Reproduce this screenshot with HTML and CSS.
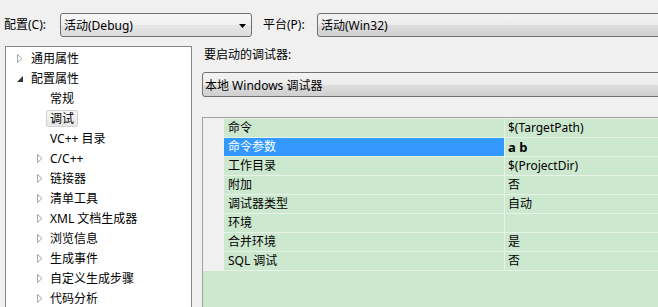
FILE: index.html
```html
<!DOCTYPE html>
<html lang="zh-CN">
<head>
<meta charset="utf-8">
<title>属性页</title>
<link rel="stylesheet" href="styles.css">
</head>
<body>
<div class="topbar">
  <span class="lbl lbl-config">配置(C):</span>
  <div class="combo combo-config">
    <span class="combo-text">活动(Debug)</span>
    <svg class="combo-arrow" width="7" height="4" viewBox="0 0 7 4"><path d="M0 0H7L3.5 4Z" fill="#000"/></svg>
  </div>
  <span class="lbl lbl-platform">平台(P):</span>
  <div class="combo combo-platform">
    <span class="combo-text">活动(Win32)</span>
  </div>
</div>
<div class="main">
  <div class="tree">
    <div class="node l1"><svg class="tw" width="6" height="9" viewBox="0 0 6 9"><path d="M0.5 0.5L5 4.5L0.5 8.5Z" fill="#fff" stroke="#a6a6a6"/></svg><span>通用属性</span></div>
    <div class="node l1"><svg class="tw" width="6" height="9" viewBox="0 0 6 9"><path d="M0 8H6V2Z" fill="#333"/></svg><span>配置属性</span></div>
    <div class="node l2 leaf"><span>常规</span></div>
    <div class="node l2 leaf"><span class="sel">调试</span></div>
    <div class="node l2 leaf"><span>VC++ 目录</span></div>
    <div class="node l2"><svg class="tw" width="6" height="9" viewBox="0 0 6 9"><path d="M0.5 0.5L5 4.5L0.5 8.5Z" fill="#fff" stroke="#a6a6a6"/></svg><span>C/C++</span></div>
    <div class="node l2"><svg class="tw" width="6" height="9" viewBox="0 0 6 9"><path d="M0.5 0.5L5 4.5L0.5 8.5Z" fill="#fff" stroke="#a6a6a6"/></svg><span>链接器</span></div>
    <div class="node l2"><svg class="tw" width="6" height="9" viewBox="0 0 6 9"><path d="M0.5 0.5L5 4.5L0.5 8.5Z" fill="#fff" stroke="#a6a6a6"/></svg><span>清单工具</span></div>
    <div class="node l2"><svg class="tw" width="6" height="9" viewBox="0 0 6 9"><path d="M0.5 0.5L5 4.5L0.5 8.5Z" fill="#fff" stroke="#a6a6a6"/></svg><span>XML 文档生成器</span></div>
    <div class="node l2"><svg class="tw" width="6" height="9" viewBox="0 0 6 9"><path d="M0.5 0.5L5 4.5L0.5 8.5Z" fill="#fff" stroke="#a6a6a6"/></svg><span>浏览信息</span></div>
    <div class="node l2"><svg class="tw" width="6" height="9" viewBox="0 0 6 9"><path d="M0.5 0.5L5 4.5L0.5 8.5Z" fill="#fff" stroke="#a6a6a6"/></svg><span>生成事件</span></div>
    <div class="node l2"><svg class="tw" width="6" height="9" viewBox="0 0 6 9"><path d="M0.5 0.5L5 4.5L0.5 8.5Z" fill="#fff" stroke="#a6a6a6"/></svg><span>自定义生成步骤</span></div>
    <div class="node l2"><svg class="tw" width="6" height="9" viewBox="0 0 6 9"><path d="M0.5 0.5L5 4.5L0.5 8.5Z" fill="#fff" stroke="#a6a6a6"/></svg><span>代码分析</span></div>
  </div>
  <div class="pane">
    <div class="pane-label">要启动的调试器:</div>
    <div class="combo combo-debugger"><span class="combo-text">本地 Windows 调试器</span></div>
    <div class="grid">
      <div class="rows">
        <div class="row"><div class="name">命令</div><div class="val">$(TargetPath)</div></div>
        <div class="row active"><div class="name">命令参数</div><div class="val bold">a b</div></div>
        <div class="row"><div class="name">工作目录</div><div class="val">$(ProjectDir)</div></div>
        <div class="row"><div class="name">附加</div><div class="val">否</div></div>
        <div class="row"><div class="name">调试器类型</div><div class="val">自动</div></div>
        <div class="row"><div class="name">环境</div><div class="val"></div></div>
        <div class="row"><div class="name">合并环境</div><div class="val">是</div></div>
        <div class="row"><div class="name">SQL 调试</div><div class="val">否</div></div>
      </div>
    </div>
  </div>
</div>
</body>
</html>
```

FILE: styles.css
```css
html, body {
  margin: 0;
  padding: 0;
  height: 100%;
  overflow: hidden;
}
body {
  background: #f0f0f0;
  font-family: "Noto Sans", "Noto Sans CJK SC", sans-serif;
  font-size: 12px;
  color: #000;
}
.topbar {
  display: flex;
  align-items: center;
  padding: 13px 0 0 4px;
  height: 24px;
}
.lbl {
  line-height: 24px;
  white-space: nowrap;
}
.lbl-config { width: 56px; }
.lbl-platform { width: 54px; margin-left: 11px; }
.combo {
  box-sizing: border-box;
  height: 24px;
  border: 1px solid #707070;
  border-radius: 3px;
  background: linear-gradient(#f3f3f3 0%, #ebebeb 50%, #dddddd 51%, #cfcfcf 100%);
  display: flex;
  align-items: center;
  position: relative;
}
.combo-text {
  padding-left: 3px;
  white-space: nowrap;
}
.combo-config {
  width: 192px;
  background: linear-gradient(#f8f8f8 0%, #f1f1f1 50%, #e6e6e6 51%, #dcdcdc 100%);
}
.combo-arrow {
  position: absolute;
  right: 5px;
  top: 10px;
}
.combo-platform {
  flex: 1;
  margin-right: -6px;
}
.main {
  display: flex;
  margin-top: 9px;
}
.tree {
  box-sizing: border-box;
  width: 187px;
  height: 270px;
  margin-left: 5px;
  background: #fff;
  border: 1px solid #828790;
  padding-top: 1px;
  flex-shrink: 0;
}
.node {
  display: flex;
  align-items: center;
  height: 20px;
  white-space: nowrap;
}
.node .tw {
  flex-shrink: 0;
  margin-right: 8px;
}
.l1 { padding-left: 11px; }
.l2 { padding-left: 31px; }
.l2.leaf { padding-left: 44px; }
.l2 .tw { margin-right: 7px; }
.sel {
  display: inline-block;
  margin-left: -4px;
  padding: 0 3px;
  line-height: 15px;
  height: 15px;
  border: 1px solid #d2d2d2;
  border-radius: 2px;
  background: linear-gradient(#f7f7f7, #e6e6e6);
}
.pane {
  flex: 1;
  margin-left: 10px;
  margin-right: -10px;
  display: flex;
  flex-direction: column;
}
.pane-label {
  height: 18px;
  line-height: 18px;
  padding-left: 2px;
}
.combo-debugger {
  margin-top: 8px;
  height: 25px;
}
.combo-debugger .combo-text { padding-left: 2px; }
.grid {
  margin-top: 20px;
  height: 200px;
  border-top: 1px solid #a0a0a0;
  border-left: 1px solid #a0a0a0;
  background: #cce8cf;
}
.rows {
  background: #f0f0f0;
  padding-left: 21px;
  padding-top: 1px;
}
.row {
  display: grid;
  grid-template-columns: 280px 1fr;
  height: 18px;
  line-height: 18px;
  border-bottom: 1px solid #e6f3e7;
  background: #cce8cf;
  white-space: nowrap;
}
.name { padding-left: 4px; }
.val {
  padding-left: 3px;
  border-left: 1px solid #e6f3e7;
}
.active .name {
  background: #3399ff;
  color: #fff;
}
.bold { font-weight: bold; font-size: 13px; }
```
